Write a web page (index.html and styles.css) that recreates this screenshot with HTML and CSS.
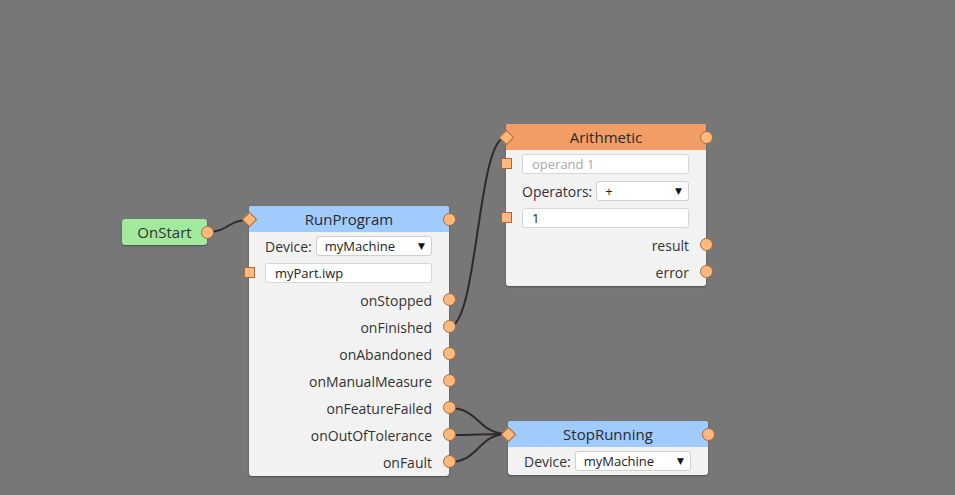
FILE: index.html
```html
<!DOCTYPE html>
<html>
<head>
<meta charset="utf-8">
<link rel="stylesheet" href="styles.css">
</head>
<body>
<div class="canvas">
  <svg class="wires" width="955" height="495" viewBox="0 0 955 495">
    <path d="M207 232 C 229 232, 227 220, 249 220"/>
    <path d="M449 327 C 478 327, 477 137, 506 137"/>
    <path d="M449 408 C 480 408, 477 434, 508 434"/>
    <path d="M449 435 C 478 435, 479 434, 508 434"/>
    <path d="M449 462 C 480 462, 477 434, 508 434"/>
  </svg>

  <div class="node start-node">
    <span>OnStart</span>
    <span class="port out"></span>
  </div>

  <div class="node run-node">
    <div class="head blue">RunProgram<span class="port in-d"></span><span class="port out"></span></div>
    <div class="row field"><span class="lbl">Device:</span><div class="select">myMachine<span class="arrow">▼</span></div></div>
    <div class="row"><span class="port in-s"></span><div class="input">myPart.iwp</div></div>
    <div class="row right"><span class="txt">onStopped</span><span class="port out"></span></div>
    <div class="row right"><span class="txt">onFinished</span><span class="port out"></span></div>
    <div class="row right"><span class="txt">onAbandoned</span><span class="port out"></span></div>
    <div class="row right"><span class="txt">onManualMeasure</span><span class="port out"></span></div>
    <div class="row right"><span class="txt">onFeatureFailed</span><span class="port out"></span></div>
    <div class="row right"><span class="txt">onOutOfTolerance</span><span class="port out"></span></div>
    <div class="row right"><span class="txt">onFault</span><span class="port out"></span></div>
  </div>

  <div class="node arith-node">
    <div class="head orange">Arithmetic<span class="port in-d"></span><span class="port out"></span></div>
    <div class="row"><span class="port in-s"></span><div class="input placeholder">operand 1</div></div>
    <div class="row field"><span class="lbl">Operators:</span><div class="select">+<span class="arrow">▼</span></div></div>
    <div class="row"><span class="port in-s"></span><div class="input">1</div></div>
    <div class="row right"><span class="txt">result</span><span class="port out"></span></div>
    <div class="row right"><span class="txt">error</span><span class="port out"></span></div>
  </div>

  <div class="node stop-node">
    <div class="head blue">StopRunning<span class="port in-d"></span><span class="port out"></span></div>
    <div class="row field"><span class="lbl">Device:</span><div class="select">myMachine<span class="arrow">▼</span></div></div>
  </div>
</div>
</body>
</html>
```

FILE: styles.css
```css
html, body {
  margin: 0;
  padding: 0;
  background: #777777;
  font-family: "Open Sans", "DejaVu Sans", sans-serif;
  color: #333333;
}

.canvas {
  position: relative;
  width: 955px;
  height: 495px;
  overflow: hidden;
}

.wires {
  position: absolute;
  left: 0;
  top: 0;
}

.wires path {
  fill: none;
  stroke: #2e2a2a;
  stroke-width: 2;
}

.node {
  position: absolute;
  background: #f2f2f2;
  border-radius: 3px;
  box-shadow: 0 1px 2px rgba(0, 0, 0, 0.35);
  font-size: 14px;
}

.start-node {
  left: 122px;
  top: 219px;
  width: 85px;
  height: 26px;
  background: #a1e99c;
  display: flex;
  align-items: center;
  justify-content: center;
  font-size: 15px;
}

.run-node {
  left: 249px;
  top: 206px;
  width: 200px;
  padding-bottom: 1px;
}

.arith-node {
  left: 506px;
  top: 124px;
  width: 200px;
  padding-bottom: 1px;
}

.stop-node {
  left: 508px;
  top: 421px;
  width: 200px;
  padding-bottom: 1px;
}

.head {
  position: relative;
  height: 26px;
  display: flex;
  align-items: center;
  justify-content: center;
  border-radius: 3px 3px 0 0;
  font-size: 15px;
  color: #2a2a2a;
}

.blue { background: #9fcbff; }
.orange { background: #f29d66; }

.row {
  position: relative;
  height: 27px;
  display: flex;
  align-items: center;
  padding: 0 17px 0 16px;
  gap: 4px;
}

.row.right {
  justify-content: flex-end;
}

.txt {
  padding-top: 2px;
}

.lbl {
  white-space: nowrap;
  padding-top: 1px;
}

.select {
  flex: 1;
  height: 18px;
  background: #ffffff;
  border: 1px solid #cfcfcf;
  border-radius: 3px;
  display: flex;
  align-items: center;
  padding: 0 6px 0 8px;
  font-size: 13px;
  color: #222;
  position: relative;
}

.arrow {
  margin-left: auto;
  font-size: 9px;
  color: #111;
}

.input {
  flex: 1;
  height: 18px;
  background: #ffffff;
  border: 1px solid #d6d6d6;
  border-radius: 3px;
  display: flex;
  align-items: center;
  padding-left: 9px;
  font-size: 13px;
  color: #222;
}

.input.placeholder {
  color: #a8a8a8;
}

.port {
  position: absolute;
  box-sizing: border-box;
  background: #ffb97c;
  border: 1px solid #a8683a;
  z-index: 2;
}

.port.out {
  width: 13px;
  height: 13px;
  border-radius: 50%;
  right: -7px;
  top: 50%;
  margin-top: -6.5px;
}

.port.in-s {
  width: 11px;
  height: 11px;
  left: -5px;
  top: 50%;
  margin-top: -5.5px;
}

.port.in-d {
  width: 11px;
  height: 11px;
  left: -5.5px;
  top: 50%;
  margin-top: -5.5px;
  transform: rotate(45deg);
}
```
